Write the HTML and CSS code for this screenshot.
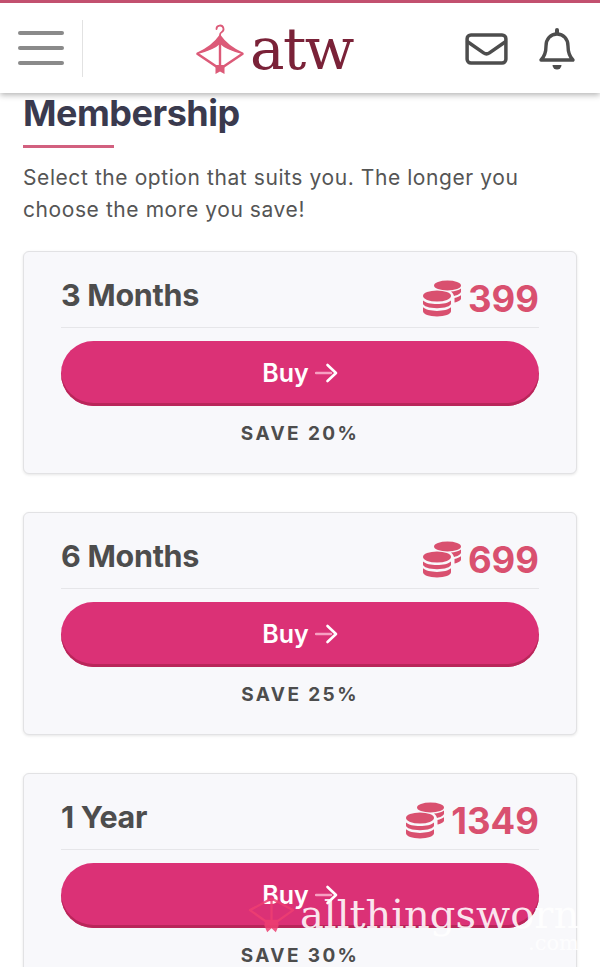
FILE: index.html
```html
<!DOCTYPE html>
<html lang="en">
<head>
<meta charset="utf-8">
<title>Membership</title>
<link rel="stylesheet" href="styles.css">
</head>
<body>
<header class="topbar">
  <button class="burger" aria-label="Menu"><span></span><span></span><span></span></button>
  <div class="logo">
    <svg class="logo-mark" viewBox="0 0 50 50" width="50" height="50" fill="none" stroke="#dc5a78">
      <path d="M21.500 5a3.500 3.500 0 1 1 5 3.200c-1.200.6-1.500 1.300-1.500 2.800v2" stroke-width="1.800" stroke-linecap="round"/>
      <path d="M2 29.500 25 45 48 29.500" stroke-width="2.600" stroke-linejoin="round"/>
      <path d="M2 29.500C12 25 20 19 25 11.500 30 19 38 25 48 29.500 38 27 30 24 25 19 20 24 12 27 2 29.500Z" fill="#dc5a78" stroke-width="1.400" stroke-linejoin="round"/>
      <path d="M25 14v30" stroke-width="2.400"/>
      <path d="M20.500 41h9v9l-4.500-2.500-4.500 2.500Z" fill="#dc5a78" stroke="none"/>
    </svg>
    <span class="logo-text">atw</span>
  </div>
  <div class="top-icons">
    <svg class="icon-mail" viewBox="0 0 44 33" width="43" height="32" fill="none" stroke="#4d4d4d" stroke-width="3.600" stroke-linejoin="round" stroke-linecap="round">
      <rect x="2" y="2" width="40" height="29" rx="4"/>
      <path d="M2.500 9 19 20.500c2 1.400 4 1.400 6 0L41.500 9"/>
    </svg>
    <svg class="icon-bell" viewBox="0 0 38 42" width="38" height="42" fill="none" stroke="#4d4d4d" stroke-width="3.400" stroke-linejoin="round" stroke-linecap="round">
      <path d="M3 32c3-3 5-6 5-14 0-7 4.500-12 11-12s11 5 11 12c0 8 2 11 5 14Z"/>
      <path d="M19 2v3" stroke-width="4"/>
      <path d="M14.500 37a4.500 4.500 0 0 0 9 0Z" fill="#4d4d4d" stroke="none"/>
    </svg>
  </div>
</header>

<main class="content">
  <h1 class="title">Membership</h1>
  <div class="rule"></div>
  <p class="intro">Select the option that suits you. The longer you choose the more you save!</p>

  <section class="card">
    <div class="card-head">
      <h2 class="plan">3 Months</h2>
      <div class="price">
        <svg class="coins" viewBox="0 0 38 37"><use href="#coins"/></svg>
        <span>399</span>
      </div>
    </div>
    <a class="buy">Buy <svg class="arrow" viewBox="0 0 23 20" width="23" height="20"><use href="#arrow"/></svg></a>
    <div class="save">SAVE 20%</div>
  </section>

  <section class="card">
    <div class="card-head">
      <h2 class="plan">6 Months</h2>
      <div class="price">
        <svg class="coins" viewBox="0 0 38 37"><use href="#coins"/></svg>
        <span>699</span>
      </div>
    </div>
    <a class="buy">Buy <svg class="arrow" viewBox="0 0 23 20" width="23" height="20"><use href="#arrow"/></svg></a>
    <div class="save">SAVE 25%</div>
  </section>

  <section class="card">
    <div class="card-head">
      <h2 class="plan">1 Year</h2>
      <div class="price">
        <svg class="coins" viewBox="0 0 38 37"><use href="#coins"/></svg>
        <span>1349</span>
      </div>
    </div>
    <a class="buy">Buy <svg class="arrow" viewBox="0 0 23 20" width="23" height="20"><use href="#arrow"/></svg></a>
    <div class="save">SAVE 30%</div>
  </section>
</main>

<div class="watermark">
  <svg class="wm-mark" viewBox="0 0 50 50" width="48" height="48" fill="none" stroke="#ee3f72">
    <path d="M2 22 24.500 10 47 22 24.500 38Z" stroke-width="2.400" stroke-linejoin="round"/>
    <path d="M24.500 10v28" stroke-width="2.400"/>
    <path d="M18 32h13l1 6-3 7-4.500-4-4.500 4-3-7Z" fill="#ee3f72" stroke="none"/>
  </svg>
  <span class="wm-name">allthingsworn</span>
  <span class="wm-com">.com</span>
</div>

<svg class="defs" width="0" height="0" aria-hidden="true">
  <symbol id="coins" viewBox="0 0 38 37">
    <g fill="#d9506f">
      <ellipse cx="24.500" cy="5.500" rx="13.500" ry="5"/>
      <path d="M28 11.500c4-.3 7.600-1.300 10-3v3c0 1.800-3 3.600-7 4.400-.5-1.700-1.500-3.200-3-4.400Z"/>
      <path d="M31.500 18c2.700-.6 5-1.500 6.500-2.700v3.200c0 1.600-2.700 3.200-6.500 4Z"/>
      <ellipse cx="14" cy="16" rx="14" ry="5.500"/>
      <path d="M0 20.500c2.500 2.300 8 3.600 14 3.600s11.500-1.300 14-3.600v3c0 2.700-6.300 4.700-14 4.700S0 26.200 0 23.500Z"/>
      <path d="M0 27.300c2.500 2.300 8 3.600 14 3.600s11.500-1.300 14-3.600v4c0 2.900-6.300 5.200-14 5.200S0 34.200 0 31.300Z"/>
    </g>
  </symbol>
  <symbol id="arrow" viewBox="0 0 23 20">
    <path d="M1 10h15" stroke="#f7a0c2" stroke-width="2.400" fill="none" stroke-linecap="round"/>
    <path d="M12.500 2l8.500 8-8.500 8" stroke="#fff" stroke-width="2.600" fill="none" stroke-linecap="round" stroke-linejoin="round"/>
  </symbol>
</svg>
</body>
</html>
```
FILE: styles.css
```css
* { box-sizing: border-box; }
html, body { margin: 0; padding: 0; }
body {
  height: 967px;
  overflow: hidden;
  position: relative;
  background: #fff;
  font-family: Inter, "Liberation Sans", sans-serif;
  color: #4d4d4d;
}
.defs { position: absolute; }

.topbar {
  height: 93px;
  border-top: 3px solid #c2506f;
  background: #fff;
  box-shadow: 0 2px 6px rgba(0,0,0,.3);
  display: flex;
  align-items: center;
  padding: 1px 24px 0 18px;
  position: relative;
}
.burger {
  width: 65px;
  height: 57px;
  padding: 11px 0 12px;
  background: none;
  border: 0;
  border-right: 1px solid #e2e2e2;
  display: flex;
  flex-direction: column;
  justify-content: space-between;
}
.burger span {
  display: block;
  width: 46px;
  height: 4px;
  border-radius: 2px;
  background: #8a8a8a;
}
.logo {
  flex: 1;
  display: flex;
  justify-content: center;
  align-items: center;
  gap: 5px;
}
.logo-mark { flex: none; }
.logo-text {
  font-family: "DejaVu Serif", serif;
  font-size: 58px;
  line-height: 60px;
  color: #7a2238;
  letter-spacing: -1.500px;
}
.top-icons {
  display: flex;
  align-items: center;
  gap: 30px;
}

.content { padding: 0 23px; }
.title {
  margin: 0;
  font-size: 36px;
  line-height: 40px;
  font-weight: 700;
  color: #3a3a4e;
  letter-spacing: -.5px;
}
.rule {
  width: 91px;
  height: 3px;
  margin-top: 12px;
  background: #d2607f;
}
.intro {
  margin: 14px 0 25px;
  font-size: 21px;
  line-height: 32px;
  color: #555;
  letter-spacing: .58px;
}
.card {
  height: 223px;
  margin-bottom: 38px;
  padding: 0 37px;
  background: #f8f8fb;
  border: 1px solid #e2e2e4;
  border-radius: 6px;
  box-shadow: 0 1px 3px rgba(0,0,0,.1);
}
.card-head {
  height: 76px;
  display: flex;
  justify-content: space-between;
  align-items: center;
  border-bottom: 1px solid #e6e6e9;
}
.plan {
  margin: 10px 0 0;
  font-size: 30.500px;
  font-weight: 700;
  color: #4d4d4d;
  letter-spacing: -.3px;
}
.price {
  display: flex;
  align-items: center;
  gap: 7px;
  margin-top: 18px;
  font-size: 36.500px;
  font-weight: 700;
  color: #d9506f;
}
.coins { width: 38px; height: 37px; }
.buy {
  margin-top: 13px;
  height: 65px;
  padding-bottom: 2px;
  display: flex;
  align-items: center;
  justify-content: center;
  gap: 6px;
  background: #db3176;
  border-radius: 33px;
  box-shadow: inset 0 -3px 0 #b9265a;
  color: #fff;
  font-size: 25px;
  font-weight: 600;
}
.save {
  margin-top: 16px;
  text-align: center;
  font-size: 19px;
  line-height: 24px;
  font-weight: 700;
  letter-spacing: 2.400px;
  color: #4d4d4d;
}

.watermark {
  position: absolute;
  left: 248px;
  top: 882px;
  width: 352px;
  height: 85px;
}
.wm-mark { position: absolute; left: 0; top: 7px; opacity: .85; }
.wm-name {
  position: absolute;
  left: 52px;
  top: 9px;
  font-family: "DejaVu Serif", serif;
  font-size: 40px;
  line-height: 46px;
  color: rgba(255,255,255,.88);
  white-space: nowrap;
}
.wm-com {
  position: absolute;
  left: 280px;
  top: 48px;
  font-family: "DejaVu Serif", serif;
  font-size: 21px;
  line-height: 26px;
  color: rgba(255,255,255,.85);
}
```
